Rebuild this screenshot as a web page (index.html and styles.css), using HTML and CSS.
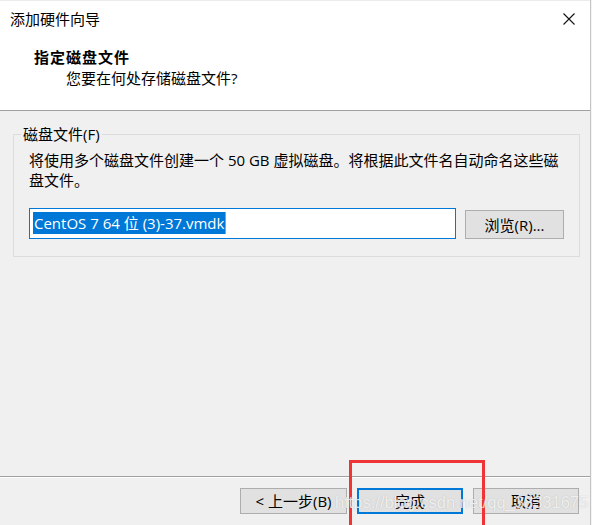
FILE: index.html
```html
<!DOCTYPE html>
<html lang="zh-CN">

<head>
    <meta charset="UTF-8">
    <meta name="viewport" content="width=device-width, initial-scale=1.0">
    <title>添加硬件向导</title>
    <link rel="stylesheet" href="styles.css">
</head>

<body>
    <div class="wizard">
        <!-- 標題區 -->
        <div class="head">
            <div class="head_bar">
                <span class="win_title">添加硬件向导</span>
                <span class="close">
                    <svg width="12" height="12" viewBox="0 0 12 12">
                        <path d="M0.5 0.5 L11.5 11.5 M11.5 0.5 L0.5 11.5" stroke="#111" stroke-width="1.1" fill="none" />
                    </svg>
                </span>
            </div>
            <h1 class="step_tittle">指定磁盘文件</h1>
            <p class="step_sub">您要在何处存储磁盘文件?</p>
        </div>

        <!-- 磁盤文件 -->
        <div class="body">
            <fieldset class="group">
                <legend>磁盘文件(F)</legend>
                <p class="desc">将使用多个磁盘文件创建一个 50 GB 虚拟磁盘。将根据此文件名自动命名这些磁<br>盘文件。</p>
                <div class="file_row">
                    <div class="file_input"><span class="sel">CentOS 7 64 位 (3)-37.vmdk</span></div>
                    <button class="btn browse">浏览(R)...</button>
                </div>
            </fieldset>
        </div>

        <!-- 按鈕 -->
        <div class="foot">
            <button class="btn">&lt; 上一步(B)</button>
            <button class="btn btn_default">完成</button>
            <button class="btn">取消</button>
        </div>

        <div class="mark"></div>
        <div class="watermark">https://blog.csdn.net/qq_38331675</div>
    </div>
</body>

</html>
```

FILE: styles.css
```css
* {
    padding: 0px;
    margin: 0px;
    box-sizing: border-box;
}

body {
    background-color: #f4f4f4;
    font-family: "Open Sans", "Noto Sans CJK SC", sans-serif;
    font-size: 15px;
    color: #000;
}

.wizard {
    position: relative;
    width: 591px;
    height: 525px;
    background-color: #f0f0f0;
    border-right: 1px solid #c4c4c4;
    display: flex;
    flex-direction: column;
    overflow: hidden;
}

.head {
    height: 111px;
    background-color: #fff;
    border-top: 1px solid #ececec;
    border-bottom: 1px solid #a0a0a0;
}

.head_bar {
    display: flex;
    justify-content: space-between;
    align-items: center;
    height: 36px;
    padding: 0 15px 0 10px;
}

.win_title {
    font-size: 15px;
    line-height: 20px;
}

.close {
    display: flex;
}

.step_tittle {
    font-size: 15px;
    font-weight: bold;
    line-height: 20px;
    margin: 10px 0 0 34px;
    letter-spacing: 1px;
}

.step_sub {
    line-height: 20px;
    margin: 1px 0 0 66px;
}

.body {
    flex: 1;
    padding: 13px 0 0 13px;
}

.group {
    width: 566px;
    border: 1px solid #dcdcdc;
    padding: 6px 15px 17px 15px;
}

.group legend {
    line-height: 20px;
    padding: 0 2px;
    margin-left: -8px;
}

.desc {
    line-height: 20px;
}

.file_row {
    display: flex;
    align-items: flex-start;
    gap: 9px;
    margin-top: 18px;
}

.file_input {
    width: 427px;
    height: 31px;
    background-color: #fff;
    border: 1px solid #0078d7;
    padding: 3px 0 0 3px;
}

.sel {
    display: inline-block;
    background-color: #0078d7;
    color: #fff;
    font-size: 15px;
    line-height: 22px;
    padding: 0 1px;
    border-right: 1px solid #f08a24;
}

.btn {
    font-family: "Open Sans", "Noto Sans CJK SC", sans-serif;
    font-size: 15px;
    color: #000;
    background-color: #e1e1e1;
    border: 1px solid #adadad;
    width: 106px;
    height: 26px;
    line-height: 22px;
}

.browse {
    width: 99px;
    height: 29px;
    margin-top: 2px;
}

.foot {
    height: 49px;
    border-top: 1px solid #a0a0a0;
    box-shadow: inset 0 1px 0 #fff;
    display: flex;
    justify-content: flex-end;
    gap: 10px;
    padding: 11px 11px 0 0;
}

.foot .btn:first-child {
    width: 107px;
}

.btn_default {
    border: 2px solid #0078d7;
}

/* 紅框標註 */
.mark {
    position: absolute;
    left: 349px;
    top: 460px;
    width: 136px;
    height: 80px;
    border: 3px solid #ee3434;
}

.watermark {
    position: absolute;
    left: 335px;
    top: 493px;
    font-family: "Liberation Sans", sans-serif;
    font-size: 16.5px;
    color: rgba(255, 255, 255, 0.8);
    text-shadow: 0 0 1px rgba(110, 110, 110, 0.45);
    white-space: nowrap;
}
```
